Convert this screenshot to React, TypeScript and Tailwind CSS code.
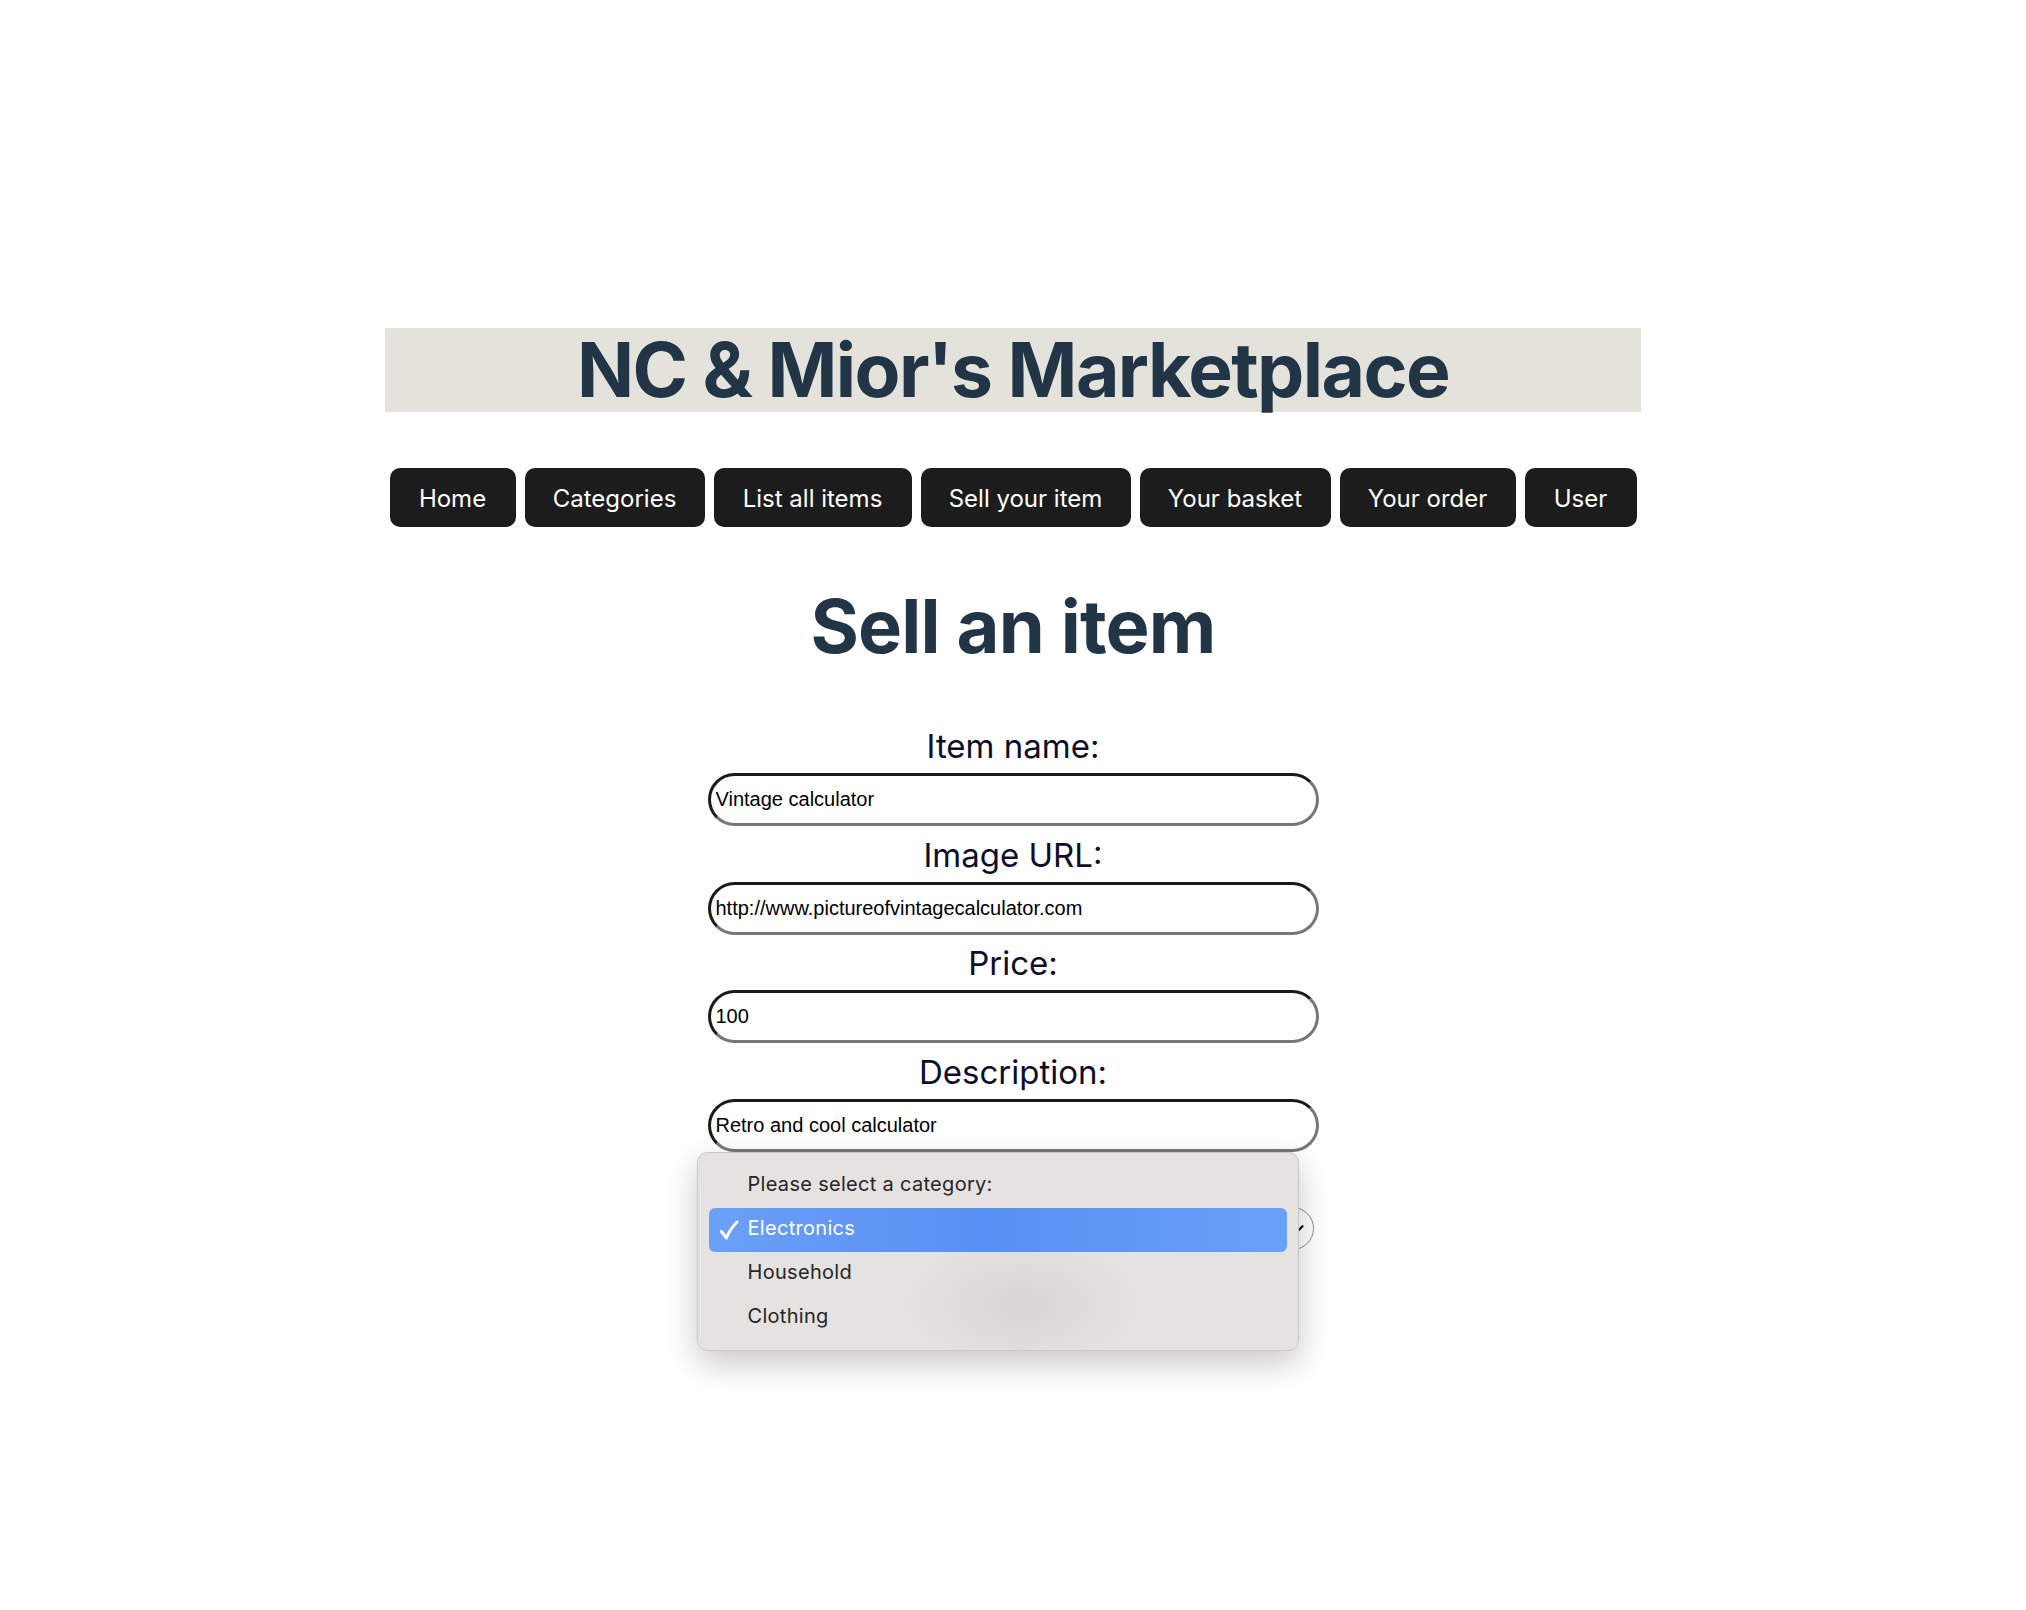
import { ChevronDown } from 'lucide-react'

const navItems = [
  { label: 'Home', width: 'w-[126px]' },
  { label: 'Categories', width: 'w-[180px]' },
  { label: 'List all items', width: 'w-[198px]' },
  { label: 'Sell your item', width: 'w-[210px]' },
  { label: 'Your basket', width: 'w-[191px]' },
  { label: 'Your order', width: 'w-[176px]' },
  { label: 'User', width: 'w-[112px]' },
]

const fields = [
  { label: 'Item name:', value: 'Vintage calculator' },
  { label: 'Image URL:', value: 'http://www.pictureofvintagecalculator.com' },
  { label: 'Price:', value: '100' },
  { label: 'Description:', value: 'Retro and cool calculator' },
]

const options = ['Electronics', 'Household', 'Clothing']

const Field = ({ label, value }: { label: string; value: string }) => (
  <div className="flex flex-col">
    <label className="block text-center text-[33px] leading-[50px] pb-[2px] text-[#0d0d2b]">
      {label}
    </label>
    <input
      defaultValue={value}
      className="h-[53px] w-full rounded-full border-[3px] border-t-[#1a1a1a] border-l-[#1a1a1a] border-r-[#777777] border-b-[#777777] bg-white pl-[5px] font-['Liberation_Sans',Arial,sans-serif] text-[20px] text-black outline-none mb-[3.5px]"
    />
  </div>
)

const CategoryPopup = () => (
  <div className="absolute left-[-11px] top-[-55px] w-[602px] h-[199px] rounded-[10px] border border-[#c9c8c6] bg-[radial-gradient(ellipse_120px_70px_at_54%_77%,#d7d6d4,#e4e3e1)] pt-[11px] px-[11px] shadow-[0_12px_32px_rgba(0,0,0,0.22)] text-[20px] tracking-[0.3px]">
    <div className="h-[44px] leading-[40px] pl-[39px] text-[#262626]">
      Please select a category:
    </div>
    {options.map((option, index) => (
      <div
        key={option}
        className={
          index === 0
            ? 'relative h-[44px] leading-[40px] pl-[39px] rounded-[6px] bg-[linear-gradient(90deg,#6ba0f7,#5790f4_48%,#6aa1f8)] text-white'
            : 'h-[44px] leading-[40px] pl-[39px] text-[#262626]'
        }
      >
        {index === 0 && (
          <svg
            viewBox="0 0 20 20"
            className="absolute left-[10px] top-[12px] w-[20px] h-[20px]"
            fill="none"
            stroke="white"
            strokeWidth={3}
            strokeLinecap="round"
            strokeLinejoin="round"
          >
            <path d="M2.5 11.5 L7.5 18 Q11 9 18 2" />
          </svg>
        )}
        {option}
      </div>
    ))}
  </div>
)

export default function App() {
  return (
    <div className="min-h-[1610px] bg-white pt-[328px] font-['Inter',sans-serif]">
      <div className="w-[1256px] mx-auto bg-[#e3e3dc]">
        <h1 className="h-[84px] text-center text-[75px] leading-[84px] font-bold text-[#213547] tracking-[-1.6px]">
          NC &amp; Mior's Marketplace
        </h1>
      </div>

      <nav className="mt-[56px] flex justify-center gap-[9px]">
        {navItems.map((item) => (
          <button
            key={item.label}
            className={`${item.width} h-[59px] pt-[2px] rounded-[10px] bg-[#1c1c1c] text-[24px] text-white`}
          >
            {item.label}
          </button>
        ))}
      </nav>

      <h2 className="mt-[59px] text-center text-[74px] leading-[80px] font-bold text-[#213547] tracking-[-0.8px]">
        Sell an item
      </h2>

      <form className="mt-[55px] w-[611px] mx-auto">
        {fields.map((field) => (
          <Field key={field.label} label={field.label} value={field.value} />
        ))}
        <div className="h-[52px]" />
        <div className="relative">
          <div className="h-[43px] w-[606px] rounded-full border border-[#8a8a8a] bg-white flex items-center justify-end pr-[5px]">
            <ChevronDown className="w-[22px] h-[22px] text-[#111]" strokeWidth={2.5} />
          </div>
          <CategoryPopup />
        </div>
      </form>
    </div>
  )
}
